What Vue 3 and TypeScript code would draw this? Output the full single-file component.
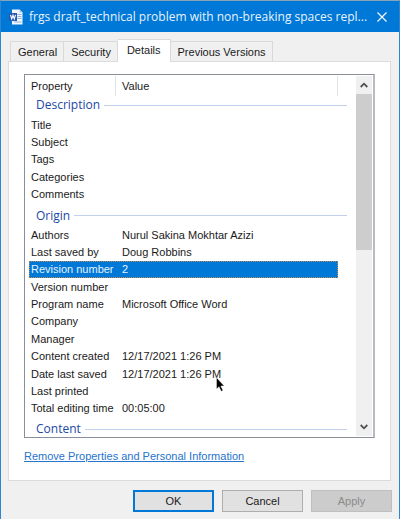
<script setup lang="ts">
import { ref } from 'vue'

interface Property {
  name: string
  value?: string
}

interface Group {
  title: string
  rows: Property[]
}

const tabs: string[] = ['General', 'Security', 'Details', 'Previous Versions']
const activeTab = ref('Details')
const selected = ref('Revision number')

const groups: Group[] = [
  {
    title: 'Description',
    rows: [
      { name: 'Title' },
      { name: 'Subject' },
      { name: 'Tags' },
      { name: 'Categories' },
      { name: 'Comments' },
    ],
  },
  {
    title: 'Origin',
    rows: [
      { name: 'Authors', value: 'Nurul Sakina Mokhtar Azizi' },
      { name: 'Last saved by', value: 'Doug Robbins' },
      { name: 'Revision number', value: '2' },
      { name: 'Version number' },
      { name: 'Program name', value: 'Microsoft Office Word' },
      { name: 'Company' },
      { name: 'Manager' },
      { name: 'Content created', value: '12/17/2021 1:26 PM' },
      { name: 'Date last saved', value: '12/17/2021 1:26 PM' },
      { name: 'Last printed' },
      { name: 'Total editing time', value: '00:05:00' },
    ],
  },
  { title: 'Content', rows: [] },
]
</script>

<template>
  <main class="dialog">
    <header class="titlebar">
      <svg class="doc-icon" viewBox="0 0 14 16" aria-hidden="true">
        <path d="M3 .5h7.500l3 3v12H3z" fill="#f4f8fd" />
        <path d="M10.500.5v3h3z" fill="#a9c4e6" />
        <path d="M8.500 5.500h4M8.500 7.500h4M8.500 9.500h4M5 13h7.500" stroke="#8db0de" stroke-width="1" />
        <path d="M0 4h8v8H0z" fill="#2358b0" />
        <path d="M1.500 5.800l1.200 4.200 1.300-3.800 1.300 3.800 1.200-4.200" fill="none" stroke="#fff" stroke-width="1.100" />
      </svg>
      <h1 class="title">frgs draft_technical problem with non-breaking spaces repl...</h1>
      <button class="close" type="button" aria-label="Close">
        <svg viewBox="0 0 10 10" aria-hidden="true">
          <path d="M.5.5l9 9M9.500.5l-9 9" stroke="#fff" stroke-width="1.100" />
        </svg>
      </button>
    </header>

    <nav class="tabs" role="tablist">
      <button
        v-for="tab in tabs"
        :key="tab"
        type="button"
        role="tab"
        class="tab"
        :class="{ active: tab === activeTab }"
        :aria-selected="tab === activeTab"
        @click="activeTab = tab"
      >
        {{ tab }}
      </button>
    </nav>

    <section class="panel">
      <div class="list">
        <div class="viewport">
          <table class="properties">
            <thead>
              <tr class="columns">
                <th scope="col">Property</th>
                <th scope="col">Value</th>
              </tr>
            </thead>
            <template v-for="group in groups" :key="group.title">
              <tbody class="group-head">
                <tr>
                  <th scope="rowgroup">{{ group.title }}</th>
                </tr>
              </tbody>
              <tbody v-if="group.rows.length" class="rows" :class="group.title.toLowerCase()">
                <tr
                  v-for="row in group.rows"
                  :key="row.name"
                  :class="{ selected: row.name === selected }"
                  @click="selected = row.name"
                >
                  <td>{{ row.name }}</td>
                  <td>
                    {{ row.value }}
                    <svg v-if="row.name === 'Date last saved'" class="pointer" viewBox="0 0 9 15" aria-hidden="true">
                      <path d="M.5.5v11.500l2.500-2.300 2.200 4.600 1.800-.9-2.200-4.400h3.400z" fill="#000" stroke="#fff" stroke-width=".4" />
                    </svg>
                  </td>
                </tr>
              </tbody>
            </template>
          </table>
        </div>
        <div class="scrollbar">
          <button type="button" aria-label="Scroll up">
            <svg viewBox="0 0 8 6" aria-hidden="true"><path d="M.7 5L4 1.700 7.300 5" /></svg>
          </button>
          <div class="track"><div class="thumb"></div></div>
          <button type="button" aria-label="Scroll down">
            <svg viewBox="0 0 8 6" aria-hidden="true"><path d="M.7 1L4 4.300 7.300 1" /></svg>
          </button>
        </div>
      </div>
      <a class="remove" href="#">Remove Properties and Personal Information</a>
    </section>

    <footer class="actions">
      <button type="button" class="default">OK</button>
      <button type="button">Cancel</button>
      <button type="button" disabled>Apply</button>
    </footer>
  </main>
</template>

<style>
body {
  margin: 0;
}
</style>

<style scoped>
* {
  box-sizing: border-box;
}

.dialog {
  display: flex;
  flex-direction: column;
  height: 100vh;
  border: 1px solid #2e86d2;
  border-top-color: #8aa3b5;
  border-bottom: 0;
  background: #f0f0f0;
  color: #1a1a1a;
  font: 11px/14px "Liberation Sans", Arial, sans-serif;
}

button {
  margin: 0;
  padding: 0;
  color: inherit;
  font: inherit;
}

.titlebar {
  display: flex;
  flex: none;
  align-items: center;
  height: 31px;
  padding-left: 8px;
  background: #0078d7;
  color: #e8f3fc;
}

.doc-icon {
  flex: none;
  width: 14px;
  height: 16px;
}

.title {
  flex: 1;
  min-width: 0;
  margin: 0 0 0 6px;
  font: 12px/18px "Open Sans", "Noto Sans", sans-serif;
  white-space: nowrap;
}

.close {
  display: grid;
  flex: none;
  place-items: center;
  width: 26px;
  height: 31px;
  margin-right: 4px;
  border: 0;
  background: none;
}

.close svg {
  width: 10px;
  height: 10px;
}

.tabs {
  display: flex;
  flex: none;
  align-items: flex-end;
  height: 29px;
  padding-left: 9px;
}

.tab {
  height: 20px;
  padding: 1px 6px 0 7px;
  border: 1px solid #d9d9d9;
  border-bottom: 0;
  border-left-width: 0;
  background: #f0f0f0;
}

.tab:first-child {
  border-left-width: 1px;
}

.tab.active {
  z-index: 1;
  height: 23px;
  margin-bottom: -1px;
  padding: 0 9px 2px;
  background: #fff;
}

.panel {
  display: flex;
  flex: 1;
  flex-direction: column;
  align-items: flex-start;
  min-height: 0;
  margin: 0 8px 0 7px;
  padding: 12px 15px 17px;
  border: 1px solid #dcdcdc;
  background: #fff;
}

.list {
  display: flex;
  flex: 1;
  align-self: stretch;
  min-height: 0;
  padding: 1px 1px 1px 0;
  border: 1px solid #8a8e98;
  border-right: 2px solid #b9bac1;
}

.viewport {
  flex: 1;
  min-width: 0;
  overflow: hidden;
}

.properties,
.properties thead {
  display: block;
}

.columns,
.rows tr {
  display: grid;
  grid-template-columns: 87px 1fr;
  align-items: center;
  margin: 0 18px 0 4px;
}

.properties th {
  padding: 0;
  font-weight: normal;
  text-align: left;
}

.columns {
  height: 20px;
}

.columns th {
  padding: 3px 0 3px 2px;
  border-right: 1px solid #e2e2e2;
}

.columns th + th {
  padding-left: 6px;
}

.group-head,
.group-head tr {
  display: block;
}

.group-head th {
  display: flex;
  align-items: center;
  height: 23px;
  margin: 0 9px 0 11px;
  padding-top: 2px;
  color: #2148a4;
  font: 12px/14px "Open Sans", "Noto Sans", sans-serif;
}

thead + .group-head th {
  height: 20px;
  padding: 0 0 2px;
}

.group-head:last-child th {
  height: 20px;
  padding-top: 4px;
}

.group-head th::after {
  flex: 1;
  height: 1px;
  margin-left: 4px;
  background: #c3d0ea;
  content: "";
}

.rows {
  display: grid;
  grid-auto-rows: 1fr;
}

.rows.description {
  height: 87px;
}

.rows.origin {
  height: 191px;
}

.rows td {
  position: relative;
  padding: 0 0 0 2px;
  white-space: nowrap;
}

.rows td + td {
  padding-left: 6px;
}

.rows .selected {
  outline: 1px dotted #c08a50;
  outline-offset: -1px;
  background: #0078d7;
  color: #e8f3fc;
}

.pointer {
  position: absolute;
  top: 10px;
  left: 100px;
  z-index: 1;
  width: 9px;
  height: 15px;
}

.scrollbar {
  display: flex;
  flex: none;
  flex-direction: column;
  width: 16px;
  background: #f0f0f0;
}

.scrollbar button {
  display: grid;
  place-items: center;
  height: 18px;
  border: 0;
  background: none;
}

.scrollbar svg {
  width: 8px;
  height: 6px;
}

.scrollbar path {
  fill: none;
  stroke: #505050;
  stroke-width: 1.800;
}

.track {
  flex: 1;
}

.thumb {
  height: 48%;
  background: #cdcdcd;
}

.remove {
  margin-top: 11px;
  color: #2674cc;
}

.actions {
  display: flex;
  flex: none;
  justify-content: flex-end;
  gap: 8px;
  padding: 9px 7px 7px;
}

.actions button {
  width: 81px;
  height: 22px;
  border: 1px solid #adadad;
  background: #e1e1e1;
}

.actions .default {
  border: 2px solid #0078d7;
}

.actions button:disabled {
  border-color: #bfbfbf;
  background: #cccccc;
  color: #8b8b8b;
}
</style>
